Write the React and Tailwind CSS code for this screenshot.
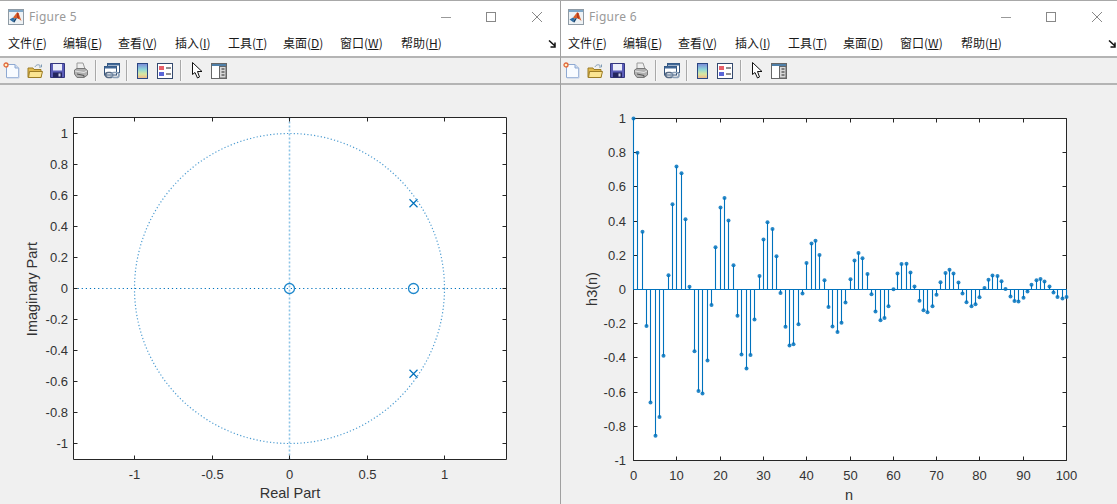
const menus = [
  ['文件', 'F', 'w-[55px]'],
  ['编辑', 'E', 'w-[55px]'],
  ['查看', 'V', 'w-[57px]'],
  ['插入', 'I', 'w-[53px]'],
  ['工具', 'T', 'w-[55px]'],
  ['桌面', 'D', 'w-[57px]'],
  ['窗口', 'W', 'w-[61px]'],
  ['帮助', 'H', 'w-[60px]'],
]

const BLUE = '#0072BD'
const DARK = '#262626'
const LABEL = '#333333'

// h3(n) from the filter shown in the pole/zero plot
function impulse() {
  const h = [1, 0.8]
  for (let n = 2; n <= 100; n++) h.push(1.6 * h[n - 1] - 0.9425 * h[n - 2])
  return h
}

function MatlabLogo() {
  return (
    <svg width="16" height="16" viewBox="0 0 16 16">
      <rect x="0.5" y="0.5" width="15" height="15" fill="#eef2f5" stroke="#8f9ba5" />
      <rect x="1" y="1" width="14" height="2" fill="#7fa8c9" />
      <path d="M1.5 10.5 L5 8.5 L7 9.5 L5 13 Z" fill="#2f6fa8" />
      <path d="M5 8.5 L9 3.5 L10.5 4 L13.5 12 L11 10 L9 9 L7 9.5 Z" fill="#d9622b" />
      <path d="M9 3.5 L10.5 4 L11 10 L9 9 Z" fill="#b5381c" />
      <path d="M5 13 L7 9.5 L9 9 L6.5 13.5 Z" fill="#16436e" />
    </svg>
  )
}

function NewIcon() {
  return (
    <svg width="17" height="17" viewBox="0 0 17 17">
      <path d="M3.5 2.5 H12 L15.5 6 V15.5 H3.5 Z" fill="#f8fbff" stroke="#8ea9d2" />
      <path d="M12 2.5 V6 H15.5" fill="#cfdcf0" stroke="#8ea9d2" />
      <path d="M4 16 H16 V6" fill="none" stroke="#b9c9e4" />
      <circle cx="3" cy="3" r="2" fill="#ffeec2" stroke="#e2683a" strokeWidth="1.3" />
    </svg>
  )
}

function OpenIcon() {
  return (
    <svg width="16" height="16" viewBox="0 0 16 16">
      <path d="M1 5 H6 L7 6.5 H14 V14.5 H1 Z" fill="#e2bb4e" stroke="#9c7d26" />
      <path d="M1.5 14.5 L2.5 8.5 H15.5 L14 14.5 Z" fill="#fbe592" stroke="#9c7d26" />
      <path d="M8 4 C9 1.5 12 1 13.5 3" fill="none" stroke="#7f9ab5" />
      <path d="M14.5 1.5 V4 H12" fill="none" stroke="#7f9ab5" />
    </svg>
  )
}

function SaveIcon() {
  return (
    <svg width="15" height="15" viewBox="0 0 15 15">
      <path d="M0.5 0.5 H14.5 V14.5 H0.5 Z" fill="#5b5db8" stroke="#34367e" />
      <rect x="3" y="1" width="9" height="6.5" fill="#eceefa" />
      <rect x="3" y="9.5" width="9" height="5" fill="#24265f" />
      <rect x="8.5" y="10.5" width="2" height="3" fill="#cfd2ea" />
    </svg>
  )
}

function PrintIcon() {
  return (
    <svg width="16" height="17" viewBox="0 0 16 17">
      <path d="M4 1 L10 1 L12 7 H4 Z" fill="#eeeeee" stroke="#9a9a9a" />
      <path d="M1.5 8 L4 6.5 H12 L14.5 8.5 V13 L11 15.5 H4 L1.5 12 Z" fill="#b0b0b0" stroke="#777777" />
      <path d="M2 9 L11 10.5 L14 9" fill="none" stroke="#e4e4e4" />
      <path d="M4 12 L11 13.5 V15" fill="none" stroke="#555555" />
    </svg>
  )
}

function LinkIcon() {
  return (
    <svg width="16" height="16" viewBox="0 0 16 16">
      <rect x="3.5" y="0.5" width="12" height="9" fill="#fff" stroke="#33527a" />
      <rect x="3.5" y="0.5" width="12" height="2" fill="#3f6797" />
      <rect x="0.5" y="3.5" width="12" height="8.5" fill="#fff" stroke="#33527a" />
      <rect x="0.5" y="3.5" width="12" height="2" fill="#3f6797" />
      <rect x="1.5" y="9.5" width="7" height="5" rx="2.5" fill="none" stroke="#566a84" strokeWidth="1.7" />
      <rect x="7.5" y="9.5" width="7.5" height="5" rx="2.5" fill="none" stroke="#8b9fb7" strokeWidth="1.7" />
    </svg>
  )
}

function ColorbarIcon({ id }) {
  return (
    <svg width="12" height="16" viewBox="0 0 12 16">
      <defs>
        <linearGradient id={id} x1="0" y1="0" x2="0" y2="1">
          <stop offset="0" stopColor="#7a88d8" />
          <stop offset="0.4" stopColor="#8fd6d8" />
          <stop offset="0.7" stopColor="#d9e7a0" />
          <stop offset="1" stopColor="#f2b48a" />
        </linearGradient>
      </defs>
      <rect x="0.5" y="0.5" width="10" height="15" fill={`url(#${id})`} stroke="#2b4682" />
    </svg>
  )
}

function LegendIcon() {
  return (
    <svg width="16" height="16" viewBox="0 0 16 16">
      <rect x="0.5" y="0.5" width="15" height="15" fill="#fff" stroke="#34496e" />
      <rect x="2" y="3" width="5" height="4" fill="#e8606a" />
      <rect x="2" y="9" width="5" height="4" fill="#5a66d8" />
      <path d="M9 5 H14 M9 11 H14" stroke="#222" />
    </svg>
  )
}

function CursorIcon() {
  return (
    <svg width="11" height="17" viewBox="0 0 11 17">
      <path d="M0.5 0.5 V12.5 L3 10.5 L5.5 16 L7.5 15 L5.5 9.5 H10 Z" fill="#fff" stroke="#111" />
    </svg>
  )
}

function PaneIcon() {
  return (
    <svg width="16" height="16" viewBox="0 0 16 16">
      <rect x="0.5" y="0.5" width="15" height="15" fill="#fff" stroke="#666666" />
      <rect x="1" y="1" width="14" height="2" fill="#4f7fa8" />
      <rect x="8.5" y="3.5" width="6.5" height="11.5" fill="#d8d8d8" stroke="#666666" />
      <path d="M10.5 6 H13.5 M10.5 9 H13.5 M10.5 12 H13.5" stroke="#222" />
    </svg>
  )
}

function Sep() {
  return <div className="h-[21px] w-[2px] mx-[3px] border-l border-[#a8a8a8] bg-[#f8f8f8]" />
}

function Tool({ children, className = '' }) {
  return <div className={`w-[23px] h-[26px] flex items-center justify-center ${className}`}>{children}</div>
}

function Toolbar({ fig }) {
  return (
    <div className="h-[27px] flex items-center bg-[#f0f0f0] border-b-2 border-[#b4b4b4]">
      <Tool><NewIcon /></Tool>
      <Tool><OpenIcon /></Tool>
      <Tool><SaveIcon /></Tool>
      <Tool><PrintIcon /></Tool>
      <Sep />
      <Tool><LinkIcon /></Tool>
      <Sep />
      <Tool><ColorbarIcon id={`cb${fig}`} /></Tool>
      <Tool className="-ml-[1px] mr-[1px]"><LegendIcon /></Tool>
      <Sep />
      <Tool className="ml-[1px]"><CursorIcon /></Tool>
      <Tool className="-ml-[2px]"><PaneIcon /></Tool>
    </div>
  )
}

function Titlebar({ fig }) {
  return (
    <div className="h-[28px] flex items-center bg-white pl-[8px] pt-[4px]">
      <MatlabLogo />
      <span className="ml-[5px] text-[12px] tracking-[0.3px] text-[#999999] font-['Noto_Sans',sans-serif]">Figure {fig}</span>
      <div className="ml-auto flex items-center pr-[18px]">
        <svg width="10" height="10" viewBox="0 0 10 10" className="mr-[35px]"><path d="M0 5.5 H10" stroke="#999" /></svg>
        <svg width="10" height="10" viewBox="0 0 10 10" className="mr-[36px]"><rect x="0.5" y="0.5" width="9" height="9" fill="none" stroke="#888" /></svg>
        <svg width="10" height="10" viewBox="0 0 10 10"><path d="M0 0 L10 10 M10 0 L0 10" stroke="#888" /></svg>
      </div>
    </div>
  )
}

function Menubar() {
  return (
    <div className="relative h-[29px] flex items-center bg-white pl-[8px] border-b-2 border-[#b4b4b4] text-[12px] text-[#1a1a1a] font-['Noto_Sans_CJK_SC',sans-serif]">
      {menus.map(([label, key, w]) => (
        <span key={key} className={w}>{label}(<span className="underline">{key}</span>)</span>
      ))}
      <svg width="8" height="8" viewBox="0 0 8 8" className="absolute left-[548px] top-[11px]">
        <path d="M1 0.5 L7 6 M7 2.5 V7 H2.5" fill="none" stroke="#111" strokeWidth="1.5" />
      </svg>
    </div>
  )
}

function Box({ x0, x1, y0, y1 }) {
  return <path d={`M${x0} ${y0} H${x1} V${y1} H${x0} Z`} fill="none" stroke={DARK} />
}

function ZPlane() {
  const x0 = 73.5, x1 = 506.5, y0 = 117.5, y1 = 459.5
  const cx = 289.5, cy = 288.5, s = 155
  const xt = [-1, -0.5, 0, 0.5, 1]
  const yt = [1, 0.8, 0.6, 0.4, 0.2, 0, -0.2, -0.4, -0.6, -0.8, -1]
  return (
    <svg width="560" height="419" viewBox="0 85 560 419" className="block" fontFamily="'Liberation Sans',sans-serif" fontSize="13" fill={LABEL}>
      <rect x={x0} y={y0} width={x1 - x0} height={y1 - y0} fill="#fff" />
      <circle cx={cx} cy={cy} r={s} fill="none" stroke={BLUE} strokeWidth="1.2" strokeDasharray="1.2 2.2" opacity="0.7" />
      <path d={`M${x0} ${cy} H${x1}`} stroke={BLUE} strokeWidth="1.2" strokeDasharray="1.2 2.9" />
      <path d={`M${cx} ${y0} V${y1}`} stroke="#8cc4e6" strokeWidth="1.6" strokeDasharray="2 2" />
      <circle cx={cx} cy={cy} r="5" fill="none" stroke="#1f88cc" strokeWidth="1.3" />
      <circle cx={cx + 0.8 * s} cy={cy} r="5" fill="none" stroke="#1f88cc" strokeWidth="1.3" />
      {[-1, 1].map((d) => {
        const px = cx + 0.8 * s
        const py = cy + d * 0.55 * s
        return <path key={d} d={`M${px - 4} ${py - 4} L${px + 4} ${py + 4} M${px + 4} ${py - 4} L${px - 4} ${py + 4}`} stroke={BLUE} strokeWidth="1.2" />
      })}
      <Box x0={x0} x1={x1} y0={y0} y1={y1} />
      {xt.map((v) => {
        const x = Math.floor(cx + v * s) + 0.5
        return (
          <g key={v}>
            <path d={`M${x} ${y1} v-4 M${x} ${y0} v4`} stroke={DARK} />
            <text x={x} y={479} textAnchor="middle">{v}</text>
          </g>
        )
      })}
      {yt.map((v) => {
        const y = Math.floor(cy - v * s) + 0.5
        return (
          <g key={v}>
            <path d={`M${x0} ${y} h4 M${x1} ${y} h-4`} stroke={DARK} />
            <text x={68} y={y + 4.5} textAnchor="end">{v}</text>
          </g>
        )
      })}
      <text x={290} y={497.5} textAnchor="middle" fontSize="14.5">Real Part</text>
      <text transform="translate(37 289) rotate(-90)" textAnchor="middle" fontSize="14.5">Imaginary Part</text>
    </svg>
  )
}

function Stem() {
  const x0 = 633.5, x1 = 1066.5, y0 = 118.5, y1 = 460.5
  const sx = 4.33, sy = 171, cy = 289.5
  const xt = [0, 10, 20, 30, 40, 50, 60, 70, 80, 90, 100]
  const yt = [1, 0.8, 0.6, 0.4, 0.2, 0, -0.2, -0.4, -0.6, -0.8, -1]
  const h = impulse()
  return (
    <svg width="560" height="419" viewBox="560 85 560 419" className="block" fontFamily="'Liberation Sans',sans-serif" fontSize="13" fill={LABEL}>
      <rect x={x0} y={y0} width={x1 - x0} height={y1 - y0} fill="#fff" />
      <Box x0={x0} x1={x1} y0={y0} y1={y1} />
      {xt.map((v) => {
        const x = Math.round(x0 + v * sx - 0.5) + 0.5
        return (
          <g key={v}>
            <path d={`M${x} ${y1} v-4 M${x} ${y0} v4`} stroke={DARK} />
            <text x={x} y={480} textAnchor="middle">{v}</text>
          </g>
        )
      })}
      {yt.map((v) => {
        const y = Math.round(cy - v * sy - 0.5) + 0.5
        return (
          <g key={v}>
            <path d={`M${x0} ${y} h4 M${x1} ${y} h-4`} stroke={DARK} />
            <text x={626} y={y + 4.5} textAnchor="end">{v}</text>
          </g>
        )
      })}
      <path d={`M${x0} ${cy} H${x1}`} stroke={BLUE} />
      {h.map((v, n) => {
        const x = Math.round(x0 + n * sx - 0.5) + 0.5
        const y = cy - v * sy
        return (
          <g key={n}>
            <path d={`M${x} ${cy} V${y}`} stroke={BLUE} strokeWidth="1.1" />
            <circle cx={x} cy={y} r="2" fill={BLUE} opacity="0.85" />
          </g>
        )
      })}
      <text x={849} y={500} textAnchor="middle" fontSize="14.5">n</text>
      <text transform="translate(597 289) rotate(-90)" textAnchor="middle" fontSize="14.5">h3(n)</text>
    </svg>
  )
}

function FigureWindow({ fig, children }) {
  return (
    <div className="w-[560px] shrink-0 flex flex-col bg-[#f0f0f0]">
      <Titlebar fig={fig} />
      <Menubar />
      <Toolbar fig={fig} />
      {children}
    </div>
  )
}

export default function App() {
  return (
    <div className="w-[1117px] h-[504px] overflow-hidden flex bg-[#f0f0f0] border-t border-[#a8a8a8]">
      <FigureWindow fig={5}><ZPlane /></FigureWindow>
      <div className="w-px -mr-px shrink-0 relative z-10 bg-[#a0a0a0]" />
      <FigureWindow fig={6}><Stem /></FigureWindow>
    </div>
  )
}
